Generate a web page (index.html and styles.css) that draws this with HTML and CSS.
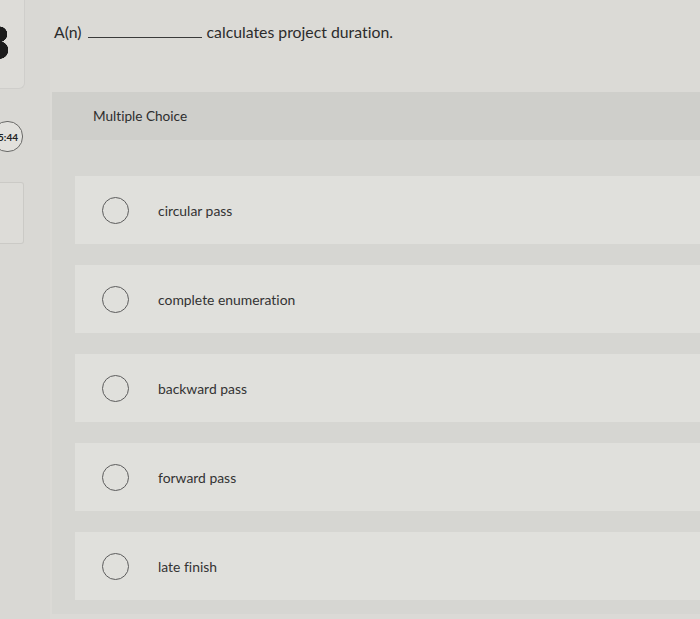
FILE: index.html
```html
<!DOCTYPE html>
<html>
<head>
<meta charset="utf-8">
<link rel="stylesheet" href="styles.css">
</head>
<body>
<div class="page">
  <aside class="side">
    <div class="side-top">
      <span class="digit"></span>
    </div>
    <div class="timer">5:44</div>
    <div class="side-box"></div>
  </aside>
  <main class="main">
    <div class="question">
      <span>A(n)</span><span class="blank"></span><span>calculates project duration.</span>
    </div>
    <section class="panel">
      <div class="panel-head">Multiple Choice</div>
      <ul class="options">
        <li class="option"><span class="radio"></span><span class="label">circular pass</span></li>
        <li class="option"><span class="radio"></span><span class="label">complete enumeration</span></li>
        <li class="option"><span class="radio"></span><span class="label">backward pass</span></li>
        <li class="option"><span class="radio"></span><span class="label">forward pass</span></li>
        <li class="option"><span class="radio"></span><span class="label">late finish</span></li>
      </ul>
    </section>
  </main>
</div>
</body>
</html>
```
FILE: styles.css
```css
html, body {
  margin: 0;
  padding: 0;
}
body {
  width: 700px;
  height: 619px;
  overflow: hidden;
  background: #d8d7d3;
  font-family: Lato, "Open Sans", sans-serif;
  font-variant-ligatures: none;
  color: #3a3a3a;
}
.page {
  display: grid;
  grid-template-columns: 50px 1fr;
  height: 619px;
}
.side {
  display: flex;
  flex-direction: column;
  background: #d9d8d4;
}
.side-top {
  width: 24px;
  height: 88px;
  background: #dddcd8;
  border-right: 1px solid #cfcecb;
  border-bottom: 1px solid #cfcecb;
  border-bottom-right-radius: 6px;
  position: relative;
  overflow: hidden;
}
.digit {
  position: absolute;
  left: -9px;
  top: 26px;
  width: 17px;
  height: 33px;
  background:
    radial-gradient(circle at 50% 25%, #1c1c1c 0 7.5px, transparent 8px),
    radial-gradient(circle at 50% 73%, #1c1c1c 0 8.5px, transparent 9px);
}
.timer {
  margin-top: 32px;
  margin-left: -8px;
  width: 31px;
  height: 31px;
  border: 1px solid #6a6a68;
  border-radius: 15px;
  background: #e2e1dd;
  font-size: 10px;
  font-weight: 700;
  color: #222;
  display: flex;
  align-items: center;
  justify-content: flex-end;
  padding-right: 4px;
  box-sizing: border-box;
}
.side-box {
  margin-top: 30px;
  width: 23px;
  height: 60px;
  border: 1px solid #cbcac6;
  border-left: none;
  border-radius: 0 3px 3px 0;
  background: #dddcd8;
}
.main {
  display: flex;
  flex-direction: column;
  background: #dbdad6;
}
.question {
  height: 92px;
  padding-left: 4px;
  padding-top: 22px;
  box-sizing: border-box;
  font-size: 15.8px;
  color: #2c2c2c;
  display: flex;
  align-items: baseline;
}
.blank {
  display: inline-block;
  width: 114px;
  border-bottom: 1px solid #3a3a3a;
  margin: 0 5px 0 6px;
}
.panel {
  flex: 1;
  margin-left: 2px;
  margin-bottom: 5px;
  background: #d6d6d2;
  display: flex;
  flex-direction: column;
}
.panel-head {
  height: 48px;
  background: #cfcfcb;
  padding-left: 41px;
  padding-top: 16px;
  box-sizing: border-box;
  font-size: 13.6px;
  color: #2e2e2e;
}
.options {
  list-style: none;
  margin: 0;
  padding: 36px 0 0 23px;
  display: flex;
  flex-direction: column;
  gap: 21px;
}
.option {
  height: 68px;
  background: #e0e0dc;
  display: flex;
  align-items: center;
  padding-left: 27px;
}
.radio {
  width: 27px;
  height: 27px;
  border: 1.5px solid #5c5c5c;
  border-radius: 50%;
  box-sizing: border-box;
  flex: none;
}
.label {
  margin-left: 29px;
  font-size: 13.9px;
  color: #333;
}
```
